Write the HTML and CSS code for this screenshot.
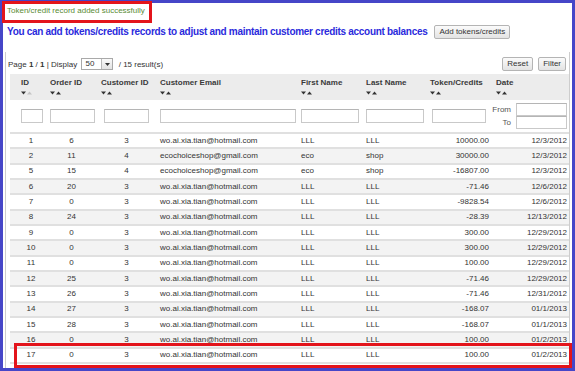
FILE: index.html
```html
<!DOCTYPE html>
<html>
<head>
<meta charset="utf-8">
<link rel="stylesheet" href="styles.css">
</head>
<body>
<div class="frame">
  <div class="msg">Token/credit record added successfully</div>
  <div class="intro">
    <h1>You can add tokens/credits records to adjust and maintain customer credits account balances</h1>
    <button class="btn">Add tokens/credits</button>
  </div>
  <div class="panel">
    <div class="pager">
      <div class="pinfo">Page <b>1</b> / <b>1</b> | Display <span class="select"><span class="sv">50</span><span class="sb"><svg width="5" height="3" viewBox="0 0 5 3"><path d="M0 0h5L2.5 3z" fill="#333"/></svg></span></span> / 15 result(s)</div>
      <div class="pbtns"><button class="btn">Reset</button><button class="btn">Filter</button></div>
    </div>
    <table class="grid">
      <colgroup>
        <col style="width:36px"><col style="width:51px"><col style="width:59px"><col style="width:141px"><col style="width:65px"><col style="width:64px"><col style="width:66px"><col style="width:77px">
      </colgroup>
      <thead>
        <tr class="head">
          <th class="c-id">ID<span class="sort"><svg width="11" height="4" viewBox="0 0 11 4"><path d="M0 0.5h5L2.5 3.5z" fill="#333"/><path d="M6 3.5h5L8.5 0.5z" fill="#c4c4c4"/></svg></span></th>
          <th>Order ID<span class="sort"><svg width="11" height="4" viewBox="0 0 11 4"><path d="M0 0.5h5L2.5 3.5z" fill="#333"/><path d="M6 3.5h5L8.5 0.5z" fill="#333"/></svg></span></th>
          <th>Customer ID<span class="sort"><svg width="11" height="4" viewBox="0 0 11 4"><path d="M0 0.5h5L2.5 3.5z" fill="#333"/><path d="M6 3.5h5L8.5 0.5z" fill="#333"/></svg></span></th>
          <th>Customer Email<span class="sort"><svg width="11" height="4" viewBox="0 0 11 4"><path d="M0 0.5h5L2.5 3.5z" fill="#333"/><path d="M6 3.5h5L8.5 0.5z" fill="#333"/></svg></span></th>
          <th>First Name<span class="sort"><svg width="11" height="4" viewBox="0 0 11 4"><path d="M0 0.5h5L2.5 3.5z" fill="#333"/><path d="M6 3.5h5L8.5 0.5z" fill="#333"/></svg></span></th>
          <th>Last Name<span class="sort"><svg width="11" height="4" viewBox="0 0 11 4"><path d="M0 0.5h5L2.5 3.5z" fill="#333"/><path d="M6 3.5h5L8.5 0.5z" fill="#333"/></svg></span></th>
          <th>Token/Credits<span class="sort"><svg width="11" height="4" viewBox="0 0 11 4"><path d="M0 0.5h5L2.5 3.5z" fill="#333"/><path d="M6 3.5h5L8.5 0.5z" fill="#333"/></svg></span></th>
          <th>Date<span class="sort"><svg width="11" height="4" viewBox="0 0 11 4"><path d="M0 0.5h5L2.5 3.5z" fill="#333"/><path d="M6 3.5h5L8.5 0.5z" fill="#333"/></svg></span></th>
        </tr>
        <tr class="filters">
          <td class="c-id"><input class="f f-id" type="text"></td>
          <td><input class="f f-mid" type="text"></td>
          <td><input class="f f-mid" type="text"></td>
          <td><input class="f f-email" type="text"></td>
          <td><input class="f f-name" type="text"></td>
          <td><input class="f f-name" type="text"></td>
          <td><input class="f f-tok" type="text"></td>
          <td class="c-date">
            <div class="range">
              <span>From</span><input class="f f-date" type="text">
              <span>To</span><input class="f f-date" type="text">
            </div>
          </td>
        </tr>
      </thead>
      <tbody>
        <tr><td class="d-id">1</td><td class="d-c">6</td><td class="d-c">3</td><td>wo.ai.xia.tian@hotmail.com</td><td>LLL</td><td>LLL</td><td class="d-tok">10000.00</td><td class="d-date">12/3/2012</td></tr>
        <tr><td class="d-id">2</td><td class="d-c">11</td><td class="d-c">4</td><td>ecochoiceshop@gmail.com</td><td>eco</td><td>shop</td><td class="d-tok">30000.00</td><td class="d-date">12/3/2012</td></tr>
        <tr><td class="d-id">5</td><td class="d-c">15</td><td class="d-c">4</td><td>ecochoiceshop@gmail.com</td><td>eco</td><td>shop</td><td class="d-tok">-16807.00</td><td class="d-date">12/3/2012</td></tr>
        <tr><td class="d-id">6</td><td class="d-c">20</td><td class="d-c">3</td><td>wo.ai.xia.tian@hotmail.com</td><td>LLL</td><td>LLL</td><td class="d-tok">-71.46</td><td class="d-date">12/6/2012</td></tr>
        <tr><td class="d-id">7</td><td class="d-c">0</td><td class="d-c">3</td><td>wo.ai.xia.tian@hotmail.com</td><td>LLL</td><td>LLL</td><td class="d-tok">-9828.54</td><td class="d-date">12/6/2012</td></tr>
        <tr><td class="d-id">8</td><td class="d-c">24</td><td class="d-c">3</td><td>wo.ai.xia.tian@hotmail.com</td><td>LLL</td><td>LLL</td><td class="d-tok">-28.39</td><td class="d-date">12/13/2012</td></tr>
        <tr><td class="d-id">9</td><td class="d-c">0</td><td class="d-c">3</td><td>wo.ai.xia.tian@hotmail.com</td><td>LLL</td><td>LLL</td><td class="d-tok">300.00</td><td class="d-date">12/29/2012</td></tr>
        <tr><td class="d-id">10</td><td class="d-c">0</td><td class="d-c">3</td><td>wo.ai.xia.tian@hotmail.com</td><td>LLL</td><td>LLL</td><td class="d-tok">300.00</td><td class="d-date">12/29/2012</td></tr>
        <tr><td class="d-id">11</td><td class="d-c">0</td><td class="d-c">3</td><td>wo.ai.xia.tian@hotmail.com</td><td>LLL</td><td>LLL</td><td class="d-tok">100.00</td><td class="d-date">12/29/2012</td></tr>
        <tr><td class="d-id">12</td><td class="d-c">25</td><td class="d-c">3</td><td>wo.ai.xia.tian@hotmail.com</td><td>LLL</td><td>LLL</td><td class="d-tok">-71.46</td><td class="d-date">12/29/2012</td></tr>
        <tr><td class="d-id">13</td><td class="d-c">26</td><td class="d-c">3</td><td>wo.ai.xia.tian@hotmail.com</td><td>LLL</td><td>LLL</td><td class="d-tok">-71.46</td><td class="d-date">12/31/2012</td></tr>
        <tr><td class="d-id">14</td><td class="d-c">27</td><td class="d-c">3</td><td>wo.ai.xia.tian@hotmail.com</td><td>LLL</td><td>LLL</td><td class="d-tok">-168.07</td><td class="d-date">01/1/2013</td></tr>
        <tr><td class="d-id">15</td><td class="d-c">28</td><td class="d-c">3</td><td>wo.ai.xia.tian@hotmail.com</td><td>LLL</td><td>LLL</td><td class="d-tok">-168.07</td><td class="d-date">01/1/2013</td></tr>
        <tr><td class="d-id">16</td><td class="d-c">0</td><td class="d-c">3</td><td>wo.ai.xia.tian@hotmail.com</td><td>LLL</td><td>LLL</td><td class="d-tok">100.00</td><td class="d-date">01/2/2013</td></tr>
        <tr><td class="d-id">17</td><td class="d-c">0</td><td class="d-c">3</td><td>wo.ai.xia.tian@hotmail.com</td><td>LLL</td><td>LLL</td><td class="d-tok">100.00</td><td class="d-date">01/2/2013</td></tr>
      </tbody>
    </table>
  </div>
</div>
<div class="hl hl-top"></div>
<div class="hl hl-row"></div>
</body>
</html>
```
FILE: styles.css
```css
* { box-sizing: border-box; }
body {
  margin: 0;
  font-family: "Liberation Sans", Arial, sans-serif;
  font-size: 8px;
  color: #333;
  background: #fff;
}
.frame {
  width: 575px;
  height: 371px;
  border: 3px solid #4646c8;
  overflow: hidden;
}
.msg {
  margin: 2px 0 0 4px;
  line-height: 12px;
  color: #5a8b34;
}
.intro {
  display: flex;
  align-items: center;
  gap: 7px;
  margin-top: 8px;
  padding-left: 4px;
}
.intro h1 {
  margin: 0;
  font-size: 10px;
  letter-spacing: -0.3px;
  line-height: 12px;
  font-weight: bold;
  color: #2b2bdc;
  white-space: nowrap;
}
.btn {
  height: 14px;
  padding: 0 4px;
  border: 1px solid #b4b4b4;
  border-radius: 2px;
  background: linear-gradient(#fbfbfb, #e3e3e3);
  font: 8px "Liberation Sans", Arial, sans-serif;
  color: #333;
  line-height: 12px;
}
.panel {
  margin: 13px 2px 0 2px;
  border: 1px solid #cdcdcd;
  border-top: 0;
  padding: 5px 0 4px 0;
}
.pager {
  display: flex;
  align-items: center;
  justify-content: space-between;
  height: 14px;
  padding: 0 3px 0 2px;
}
.pinfo { display: flex; align-items: center; white-space: pre; }
.pinfo b { font-weight: bold; }
.select {
  display: inline-flex;
  align-items: center;
  width: 32px;
  height: 12px;
  margin: 0 3px 0 2px;
  border: 1px solid #a9a9a9;
  background: #fff;
}
.sv { flex: 1; padding-left: 3px; line-height: 10px; }
.sb {
  display: flex;
  align-items: center;
  justify-content: center;
  width: 11px;
  height: 10px;
  border-left: 1px solid #b9b9b9;
  background: linear-gradient(#fafafa, #e2e2e2);
}
.pbtns { display: flex; gap: 5px; }
.grid {
  width: 559px;
  margin: 3px 0 0 4px;
  table-layout: fixed;
  border-collapse: separate;
  border-spacing: 0;
}
.head th {
  background: #ececec;
  height: 26px;
  padding: 4px 4px 0 4px;
  vertical-align: top;
  text-align: left;
  font-weight: bold;
  line-height: 10px;
  color: #3a3a3a;
  white-space: nowrap;
}
.head th.c-id { padding-left: 11px; }
.sort { display: block; margin-top: 3px; height: 4px; line-height: 4px; }
.sort svg { display: block; }
.filters td {
  height: 34px;
  padding: 0 4px;
  border-bottom: 2px solid #e0e0e0;
  vertical-align: middle;
}
.filters td.c-id { padding-left: 11px; }
.filters td.c-date { padding: 0 2px 0 4px; }
.f {
  display: block;
  height: 14px;
  margin: 0 auto;
  padding: 0;
  border: 1px solid #c9c9c9;
  border-top-color: #b5b5b5;
  background: #fff;
}
.f-id { width: 22px; margin-left: 0; }
.f-mid { width: 45px; }
.f-email { width: 136px; margin-left: 0; }
.f-name { width: 58px; }
.f-tok { width: 54px; }
.range {
  display: grid;
  grid-template-columns: auto 51px;
  column-gap: 5px;
  justify-content: end;
  align-items: center;
}
.range span { text-align: right; color: #555; }
.f-date { width: 51px; height: 13px; }
tbody td {
  height: 15.33px;
  padding: 0 4px;
  border-bottom: 2px solid #e0e0e0;
  white-space: nowrap;
  color: #333;
  line-height: 10px;
}
tbody tr:nth-child(even) td { background: #f3f3f3; }
td.d-id { padding: 0 0 0 6px; text-align: center; }
td.d-c { text-align: center; }
td.d-tok { text-align: right; padding-right: 3px; }
td.d-date { text-align: right; padding-right: 2px; }
.hl {
  position: absolute;
  border: 3px solid #e3141b;
  pointer-events: none;
}
.hl-top { left: 2px; top: 1px; width: 150px; height: 22px; }
.hl-row { left: 14px; top: 343px; width: 558px; height: 25px; }
```
